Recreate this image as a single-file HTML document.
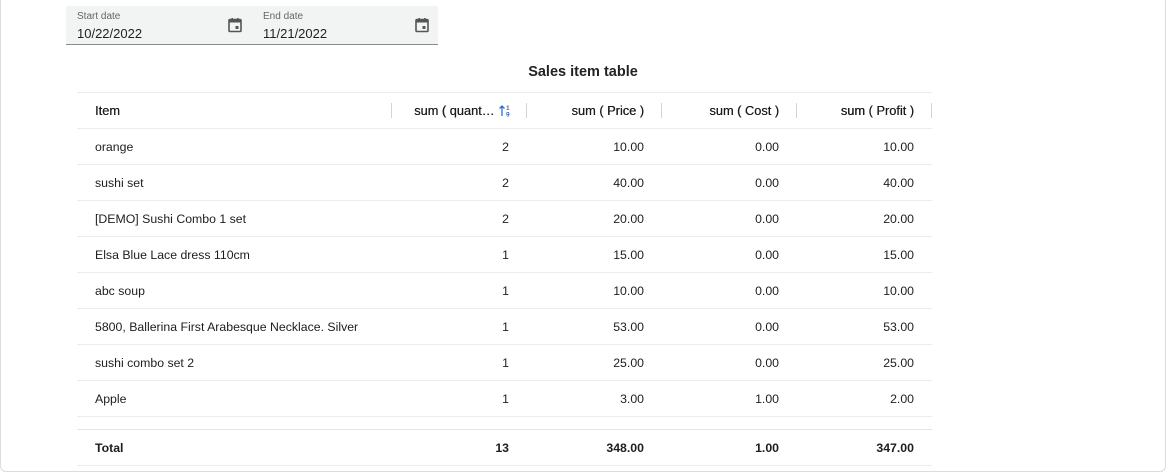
<!DOCTYPE html><html><head><style>
body{margin:0;width:1166px;height:472px;background:#fff;font-family:"Liberation Sans",sans-serif;color:#1d1d1d;position:relative;overflow:hidden}
.frame{position:absolute;left:0;top:-4px;width:1164px;height:474px;border:1px solid #dcdcdc;border-radius:6px}
.df{position:absolute;top:6px;height:38px;background:#f2f3f3;border-bottom:1px solid #8a8a8a}
.lab{position:absolute;left:11px;top:5px;font-size:10px;color:#666}
.val{position:absolute;left:11px;top:20px;font-size:13px;color:#222}
.cal{position:absolute;top:11px}
h1{position:absolute;top:64px;left:0;width:1166px;text-align:center;font-size:14.5px;font-weight:bold;margin:0;color:#222}
table{position:absolute;left:77px;top:92px;border-collapse:collapse;font-size:12.3px;table-layout:fixed}
td,th{height:35px;border-bottom:1px solid #ececec;padding:0 18px;text-align:right;position:relative;white-space:nowrap}
th{font-weight:normal;border-top:1px solid #ececec;height:35px;font-size:12.8px;text-shadow:0.3px 0 0 #1d1d1d}
td:first-child,th:first-child{text-align:left}
th .sep{position:absolute;right:0;top:10px;height:15px;border-right:1px solid #d4d4d4}
tr.gap td{height:12px;border-bottom:1px solid #e4e4e4}
tr.tot td{font-weight:bold;height:35px}
</style></head><body><div class="frame"></div>
<div class="df" style="left:66px;width:186px"><div class="lab">Start date</div><div class="val">10/22/2022</div>
<svg class="cal" style="left:161px" width="16" height="16" viewBox="0 0 16 16"><rect x="2" y="2.5" width="12" height="12" rx="1" fill="none" stroke="#555" stroke-width="1.6"/><rect x="2" y="2.5" width="12" height="3" fill="#555"/><rect x="4.5" y="1" width="1.5" height="2" fill="#555"/><rect x="10" y="1" width="1.5" height="2" fill="#555"/><rect x="8.5" y="9" width="3" height="3" fill="#555"/></svg></div>
<div class="df" style="left:252px;width:186px"><div class="lab">End date</div><div class="val">11/21/2022</div>
<svg class="cal" style="left:162px" width="16" height="16" viewBox="0 0 16 16"><rect x="2" y="2.5" width="12" height="12" rx="1" fill="none" stroke="#555" stroke-width="1.6"/><rect x="2" y="2.5" width="12" height="3" fill="#555"/><rect x="4.5" y="1" width="1.5" height="2" fill="#555"/><rect x="10" y="1" width="1.5" height="2" fill="#555"/><rect x="8.5" y="9" width="3" height="3" fill="#555"/></svg></div>
<h1>Sales item table</h1>
<table>
<colgroup><col style="width:315px"><col style="width:135px"><col style="width:135px"><col style="width:135px"><col style="width:135px"></colgroup>
<tr><th>Item<span class="sep"></span></th><th style="padding-right:16px">sum ( quant… <svg width="13" height="13" viewBox="0 0 13 13" style="vertical-align:-2px"><path d="M4 12V2M1.5 4.5L4 2l2.5 2.5" stroke="#2a6fd6" stroke-width="1.3" fill="none"/><text x="8" y="6" font-size="6" fill="#2a6fd6" font-family="Liberation Sans">1</text><text x="8" y="12.5" font-size="6" fill="#2a6fd6" font-family="Liberation Sans">9</text></svg><span class="sep"></span></th><th>sum ( Price )<span class="sep"></span></th><th>sum ( Cost )<span class="sep"></span></th><th>sum ( Profit )<span class="sep"></span></th></tr>
<tr><td>orange</td><td>2</td><td>10.00</td><td>0.00</td><td>10.00</td></tr>
<tr><td>sushi set</td><td>2</td><td>40.00</td><td>0.00</td><td>40.00</td></tr>
<tr><td>[DEMO] Sushi Combo 1 set</td><td>2</td><td>20.00</td><td>0.00</td><td>20.00</td></tr>
<tr><td>Elsa Blue Lace dress 110cm</td><td>1</td><td>15.00</td><td>0.00</td><td>15.00</td></tr>
<tr><td>abc soup</td><td>1</td><td>10.00</td><td>0.00</td><td>10.00</td></tr>
<tr><td>5800, Ballerina First Arabesque Necklace. Silver</td><td>1</td><td>53.00</td><td>0.00</td><td>53.00</td></tr>
<tr><td>sushi combo set 2</td><td>1</td><td>25.00</td><td>0.00</td><td>25.00</td></tr>
<tr><td>Apple</td><td>1</td><td>3.00</td><td>1.00</td><td>2.00</td></tr>
<tr class="gap"><td></td><td></td><td></td><td></td><td></td></tr>
<tr class="tot"><td>Total</td><td>13</td><td>348.00</td><td>1.00</td><td>347.00</td></tr>
</table>
</body></html>
